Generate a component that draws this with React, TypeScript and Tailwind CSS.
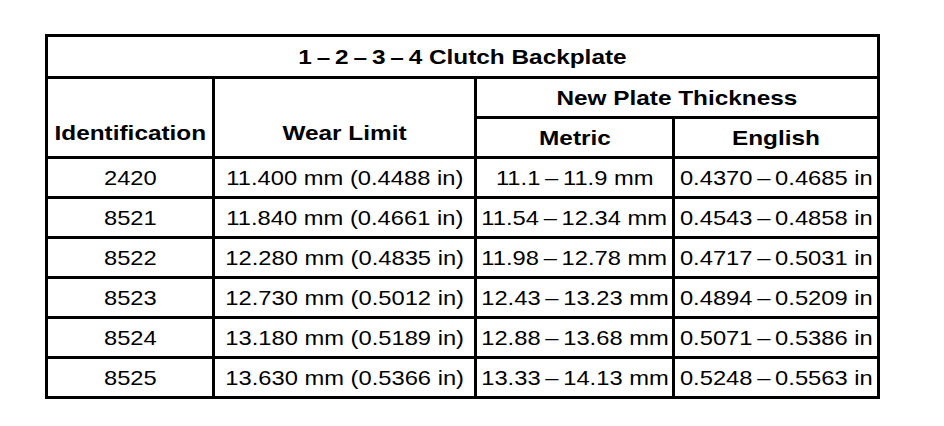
import React from 'react';

const rows = [
  { id: '2420', wear: '11.400 mm (0.4488 in)', metric: ['11.1', '11.9 mm'], english: ['0.4370', '0.4685 in'] },
  { id: '8521', wear: '11.840 mm (0.4661 in)', metric: ['11.54', '12.34 mm'], english: ['0.4543', '0.4858 in'] },
  { id: '8522', wear: '12.280 mm (0.4835 in)', metric: ['11.98', '12.78 mm'], english: ['0.4717', '0.5031 in'] },
  { id: '8523', wear: '12.730 mm (0.5012 in)', metric: ['12.43', '13.23 mm'], english: ['0.4894', '0.5209 in'] },
  { id: '8524', wear: '13.180 mm (0.5189 in)', metric: ['12.88', '13.68 mm'], english: ['0.5071', '0.5386 in'] },
  { id: '8525', wear: '13.630 mm (0.5366 in)', metric: ['13.33', '14.13 mm'], english: ['0.5248', '0.5563 in'] },
];

const Dash = () => <span className="inline-block w-[20px] text-center">–</span>;

const cell = 'bg-white flex items-center justify-center whitespace-nowrap';
const txt = 'inline-block scale-x-[1.13]';
const bold = 'inline-block scale-x-[1.16] font-bold';

export default function App() {
  return (
    <div className="w-[944px] h-[426px] bg-white pt-[34px] pl-[45px] font-['Liberation_Sans',Arial,sans-serif] text-[21px] leading-[24px] text-black">
      <div className="w-[835px] bg-black p-[3px] grid grid-cols-[164px_259px_195px_202px] grid-rows-[39px_repeat(8,37px)] gap-[3px]">
        {/* Title */}
        <div className={`${cell} col-span-4`}>
          <span className={bold}>
            1<Dash />2<Dash />3<Dash />4 Clutch Backplate
          </span>
        </div>

        {/* Header */}
        <div className="bg-white row-span-2 flex items-end justify-center pb-[11px] whitespace-nowrap">
          <span className={bold}>Identification</span>
        </div>
        <div className="bg-white row-span-2 flex items-end justify-center pb-[11px] whitespace-nowrap">
          <span className={bold}>Wear Limit</span>
        </div>
        <div className={`${cell} col-span-2`}>
          <span className={bold}>New Plate Thickness</span>
        </div>
        <div className={cell}>
          <span className={bold}>Metric</span>
        </div>
        <div className={cell}>
          <span className={bold}>English</span>
        </div>

        {/* Data */}
        {rows.map(r => (
          <React.Fragment key={r.id}>
            <div className={cell}>
              <span className={txt}>{r.id}</span>
            </div>
            <div className={cell}>
              <span className={txt}>{r.wear}</span>
            </div>
            <div className={cell}>
              <span className={txt}>
                {r.metric[0]}<Dash />{r.metric[1]}
              </span>
            </div>
            <div className={cell}>
              <span className={txt}>
                {r.english[0]}<Dash />{r.english[1]}
              </span>
            </div>
          </React.Fragment>
        ))}
      </div>
    </div>
  );
}
